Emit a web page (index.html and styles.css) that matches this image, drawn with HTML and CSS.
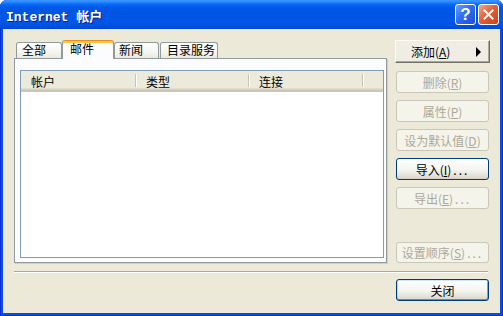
FILE: index.html
```html
<!DOCTYPE html>
<html lang="zh-CN">
<head>
  <meta charset="UTF-8">
  <title>Internet 帐户</title>
  <link rel="stylesheet" href="styles.css">
</head>
<body>
  <div class="window">
    <div class="titlebar">
      <span class="title">Internet 帐户</span>
      <div class="caption-buttons">
        <button class="cap cap-help">?</button>
        <button class="cap cap-close">
          <svg width="11" height="11" viewBox="0 0 11 11">
            <path d="M1.5 1.5 L9.5 9.5 M9.5 1.5 L1.5 9.5" stroke="#fff" stroke-width="2" stroke-linecap="square"/>
          </svg>
        </button>
      </div>
    </div>

    <div class="client">
      <div class="main">
        <div class="tabs-area">
          <div class="tabs">
            <div class="tab tab-all">全部</div>
            <div class="tab tab-mail active">邮件</div>
            <div class="tab tab-news">新闻</div>
            <div class="tab tab-dir">目录服务</div>
          </div>
          <div class="panel">
            <div class="list">
              <div class="list-header">
                <div class="col col-first">帐户</div>
                <span class="divider"></span>
                <div class="col col-mid">类型</div>
                <span class="divider"></span>
                <div class="col col-last">连接</div>
                <span class="divider"></span>
              </div>
            </div>
          </div>
        </div>

        <div class="actions">
          <button class="btn btn-menu"><span>添加(<u>A</u>)</span><span class="arrow"></span></button>
          <button class="btn" disabled>删除(<u>R</u>)</button>
          <button class="btn" disabled>属性(<u>P</u>)</button>
          <button class="btn" disabled>设为默认值(<u>D</u>)</button>
          <button class="btn">导入(<u>I</u>)<span class="dots">...</span></button>
          <button class="btn" disabled>导出(<u>E</u>)<span class="dots">...</span></button>
          <button class="btn btn-last" disabled>设置顺序(<u>S</u>)<span class="dots">...</span></button>
        </div>
      </div>

      <div class="separator"></div>

      <div class="footer">
        <button class="btn btn-default">关闭</button>
      </div>
    </div>
  </div>
</body>
</html>
```

FILE: styles.css
```css
* {
  box-sizing: border-box;
}

body {
  margin: 0;
  background: #ffffff;
  font-family: "Noto Sans CJK SC", "Liberation Sans", sans-serif;
  font-size: 12px;
  color: #000;
}

.window {
  width: 503px;
  height: 316px;
  display: flex;
  flex-direction: column;
  border-radius: 7px 7px 0 0;
  overflow: hidden;
  background: #0a4ddf;
  box-shadow: inset 1px 0 0 #0831d9, inset -1px 0 0 #0831d9, inset 0 -1px 0 #0831d9;
}

/* title bar */
.titlebar {
  height: 29px;
  flex: none;
  display: flex;
  align-items: center;
  padding: 0 4px 0 6px;
  background: linear-gradient(to bottom, #3c95ff 0, #2a89ff 2px, #0b6cf7 4px, #005be8 7px, #0055e3 11px, #0056e8 22px, #0050de 26px, #0046d2 29px);
}

.title {
  flex: 1;
  font-family: "Liberation Mono", "Noto Sans CJK SC", monospace;
  font-weight: bold;
  font-size: 13px;
  color: #fff;
  text-shadow: 1px 1px 0 #0c1b8a;
  padding-top: 1px;
}

.caption-buttons {
  display: flex;
  gap: 2px;
}

.cap {
  width: 21px;
  height: 21px;
  border: 1px solid #fff;
  border-radius: 3px;
  padding: 0;
  display: flex;
  align-items: center;
  justify-content: center;
}

.cap-help {
  background: linear-gradient(135deg, #6e9dff 0%, #2f6cf2 45%, #1a4fd6 100%);
  color: #fff;
  font: bold 17px "Liberation Sans", sans-serif;
  line-height: 1;
}

.cap-close {
  background: linear-gradient(135deg, #f5a88a 0%, #e2603a 45%, #c7411d 100%);
}

/* client area */
.client {
  flex: 1;
  margin: 0 3px 3px;
  background: #ece9d8;
  padding: 11px 11px 0;
  display: flex;
  flex-direction: column;
}

.main {
  display: flex;
  height: 223px;
  flex: none;
}

.tabs-area {
  width: 373px;
  flex: none;
  display: flex;
  flex-direction: column;
}

.tabs {
  display: flex;
  align-items: flex-end;
  height: 18px;
  padding-left: 2px;
  position: relative;
  z-index: 1;
}

.tab {
  height: 16px;
  border: 1px solid #919b9c;
  border-bottom: none;
  border-radius: 3px 3px 0 0;
  background: linear-gradient(#fffffe, #f6f5f0 60%, #e9e8e1);
  line-height: 14px;
  white-space: nowrap;
}

.tab-all {
  width: 46px;
  padding-left: 5px;
}

.tab-mail {
  width: 52px;
  padding-left: 7px;
}

.tab-news {
  width: 45px;
  padding-left: 4px;
}

.tab-dir {
  width: 58px;
  margin-left: 1px;
  padding-left: 6px;
}

.tab.active {
  height: 19px;
  margin-bottom: -1px;
  background: #fcfcfe;
  border-top: 1px solid #e68b2c;
  box-shadow: inset 0 2px 0 #ffc83c;
  line-height: 15px;
}

.panel {
  height: 205px;
  border: 1px solid #919b9c;
  background: #fcfcfe;
  box-shadow: 1px 1px 0 #d2cfc0;
}

.list {
  width: 364px;
  height: 188px;
  margin: 11px 0 0 5px;
  border: 1px solid #7f9db9;
  background: #ffffff;
}

.list-header {
  display: flex;
  align-items: center;
  height: 21px;
  background: linear-gradient(#ebeadb 0, #ebeadb 17px, #e2decd 17px, #e2decd 18px, #d6d2c2 18px, #d6d2c2 19px, #cbc7b8 19px);
}

.col {
  height: 18px;
  line-height: 18px;
  padding-left: 9px;
}

.col-first {
  width: 114px;
  padding-left: 10px;
}

.col-mid {
  width: 111px;
}

.col-last {
  width: 112px;
}

.divider {
  width: 2px;
  height: 13px;
  margin-bottom: 2px;
  border-left: 1px solid #c7c5b2;
  border-right: 1px solid #fff;
}

/* buttons */
.actions {
  width: 93px;
  margin-left: 9px;
  display: flex;
  flex-direction: column;
  gap: 7px;
}

.btn {
  height: 22px;
  border: 1px solid #003c74;
  border-radius: 3px;
  background: linear-gradient(#ffffff, #f4f4f0 55%, #e3e0d6 85%, #d6d0c5);
  font: inherit;
  color: #000;
  display: flex;
  align-items: center;
  justify-content: center;
  padding: 0;
  white-space: nowrap;
}

.btn:disabled {
  border-color: #c9c7ba;
  background: #f5f4ea;
  color: #aca899;
}

.btn u {
  text-underline-offset: 1px;
}

.dots {
  letter-spacing: 2px;
  margin-left: 2px;
}

.btn-menu {
  width: 95px;
  height: 23px;
  margin: 0 0 1px -1px;
  border-radius: 0;
  border-color: #fcfbf7 #716f64 #716f64 #fcfbf7;
  box-shadow: inset -1px -1px 0 #aca899;
  background: #efede4;
  justify-content: space-between;
  padding: 0 8px 0 15px;
}

.arrow {
  width: 0;
  height: 0;
  border-left: 5px solid #000;
  border-top: 5px solid transparent;
  border-bottom: 5px solid transparent;
}

.btn-last {
  margin-top: auto;
  height: 21px;
}

.separator {
  width: 474px;
  margin-top: 8px;
  border-top: 1px solid #aca899;
  border-bottom: 1px solid #fff;
}

.footer {
  display: flex;
  justify-content: flex-end;
  margin-top: 6px;
}

.btn-default {
  width: 93px;
  box-shadow: inset 0 1px 0 #cee7ff, inset 0 -1px 0 #6982ee, inset 1px 0 0 #b9d1fa, inset -1px 0 0 #7d99f0;
}
```
